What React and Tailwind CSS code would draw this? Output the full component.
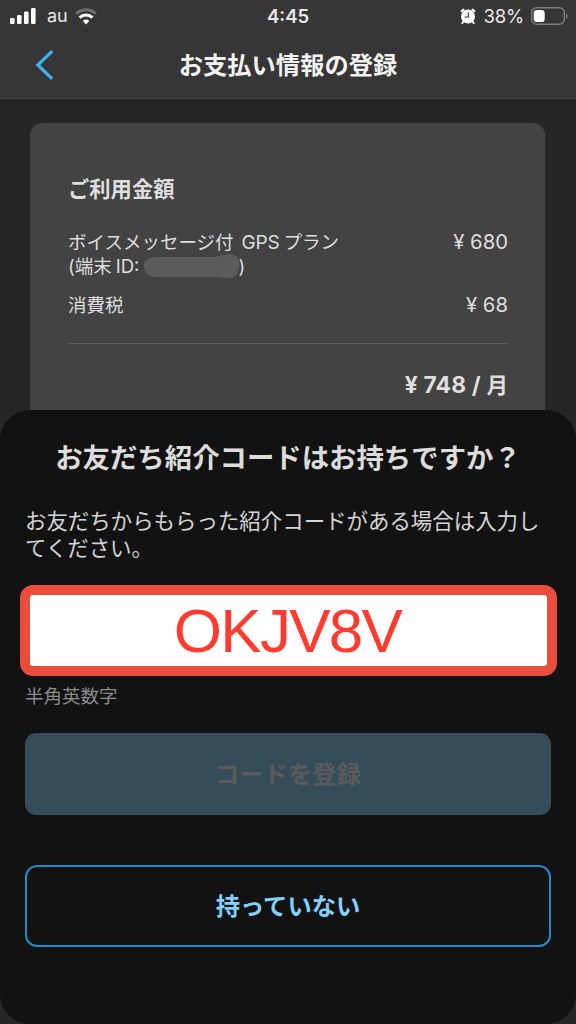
import React, { useState } from 'react';

const SignalIcon = () => (
  <svg width="26" height="16" viewBox="0 0 26 16" fill="#fff">
    <rect x="0" y="10" width="4.6" height="6" rx="1.3" />
    <rect x="7" y="7" width="4.6" height="9" rx="1.3" />
    <rect x="14" y="3.5" width="4.6" height="12.5" rx="1.3" />
    <rect x="21" y="0" width="4.6" height="16" rx="1.3" />
  </svg>
);

const WifiIcon = () => (
  <svg width="22" height="17" viewBox="0 0 22 17" fill="none">
    <path d="M1.2 5.6a14.2 14.2 0 0 1 19.6 0" stroke="#6e6e6e" strokeWidth="3" />
    <path d="M4.6 9.6a9.2 9.2 0 0 1 12.8 0" stroke="#fff" strokeWidth="3.2" />
    <path d="M11 16.6 7.8 13.1a4.7 4.7 0 0 1 6.4 0z" fill="#fff" />
  </svg>
);

const AlarmIcon = () => (
  <svg width="16" height="17" viewBox="0 0 16 17">
    <circle cx="8" cy="8.6" r="7" fill="#fff" />
    <path d="M1.8 3.2 3.3 1.8M14.2 3.2 12.7 1.8" stroke="#fff" strokeWidth="2.4" strokeLinecap="round" />
    <path d="M3.4 13.6 2.2 15.2M12.6 13.6 13.8 15.2" stroke="#fff" strokeWidth="1.8" strokeLinecap="round" />
    <path d="M8.4 4.6V9H4.6" fill="none" stroke="#363636" strokeWidth="1.1" />
  </svg>
);

const BatteryIcon = () => (
  <svg width="37" height="18" viewBox="0 0 37 18">
    <rect x="0.7" y="0.7" width="32.6" height="16.6" rx="5" fill="none" stroke="#7c7c7c" strokeWidth="1.4" />
    <rect x="2.7" y="2.9" width="11" height="12.2" rx="3.4" fill="#fff" />
    <path d="M35 6.2c2 .8 2 4.8 0 5.6z" fill="#7c7c7c" />
  </svg>
);

const StatusBar = () => (
  <div className="grid grid-cols-3 items-center h-8 pl-[10px] pr-2 font-['Inter',sans-serif] text-[#e8e8e8]">
    <div className="flex items-center">
      <SignalIcon />
      <span className="ml-[11px] mr-[7px] text-[18px] leading-none">au</span>
      <WifiIcon />
    </div>
    <span className="-ml-[2px] text-center text-[18.5px] leading-none font-semibold">4:45</span>
    <div className="flex items-center justify-end">
      <AlarmIcon />
      <span className="ml-2 mr-[7px] text-[18.5px] leading-none tracking-[-0.2px]">38%</span>
      <BatteryIcon />
    </div>
  </div>
);

const Header = () => (
  <header className="bg-[#363636] border-b border-[#454545] h-[99px]">
    <StatusBar />
    <div className="grid grid-cols-[80px_1fr_80px] items-center h-[66px]">
      <button className="pl-[35px]" aria-label="戻る">
        <svg width="19" height="30" viewBox="0 0 19 30" fill="none">
          <path d="M17.2 1.2 2.8 15l14.4 13.8" stroke="#3fb0f2" strokeWidth="3.2" />
        </svg>
      </button>
      <h1 className="text-center text-[24.3px] leading-none font-bold text-[#f2f2f2]">お支払い情報の登録</h1>
    </div>
  </header>
);

const BillingCard = () => (
  <section className="ml-[30px] mr-[31px] mt-6 h-[320px] rounded-t-[12px] bg-[#434343] pl-[38px] pr-[37px] pt-[54px] text-[#dedede]">
    <h2 className="text-[21.3px] leading-6 font-bold">ご利用金額</h2>
    <div className="mt-[29px] flex h-12 justify-between text-[18.5px] leading-6">
      <div>
        <p className="h-6">
          ボイスメッセージ付
          <span className="ml-[8px] mr-[4px] text-[19px] leading-none tracking-[-0.2px]">GPS</span>プラン
        </p>
        <p className="flex h-6 items-center">
          (端末<span className="ml-[4px]">ID:</span>
          <svg className="ml-1 -mr-[2px]" width="97" height="25" viewBox="0 0 97 25">
            <path
              d="M12 3H68C77 3 79 0 87 0c7 0 10 6 9 13-1 7-3 11-10 11-7 0-9-1-16-1H14C6 23 1 19 1 12 1 7 5 3 12 3z"
              fill="#5b5b5b"
            />
          </svg>
          )
        </p>
      </div>
      <p className="text-[20.3px]">¥ 680</p>
    </div>
    <div className="mt-[15px] flex h-6 justify-between text-[18.5px] leading-6">
      <p>消費税</p>
      <p className="text-[20.3px]">¥ 68</p>
    </div>
    <p className="mt-[26px] border-t border-[#5a5a5a] pt-[29px] text-right text-[21.5px] leading-6 font-bold">
      <span className="text-[22.8px] leading-none tracking-[0.2px]">¥ 748 / </span>月
    </p>
  </section>
);

const ReferralSheet = () => {
  const [code, setCode] = useState('OKJV8V');

  return (
    <div className="absolute inset-x-0 bottom-0 h-[614px] rounded-[30px] bg-[#121212] px-[25px] pt-[34px]">
      <h2 className="text-center text-[27.4px] leading-7 font-bold whitespace-nowrap text-[#dcdcdc]">
        お友だち紹介コードはお持ちですか？
      </h2>
      <p className="-mr-2 mt-[36px] text-[21.45px] leading-[27px] text-[#d4d4d4]">
        お友だちからもらった紹介コードがある場合は入力し
        <br />
        てください。
      </p>
      <input
        className="-ml-[5px] mt-[23px] block h-[91px] w-[537px] rounded-[13px] border-[10px] border-[#e94d3d] bg-white pr-[2px] text-center font-['Liberation_Sans',sans-serif] text-[62px] tracking-[-1.7px] text-[#ff3b30] outline-none"
        value={code}
        onChange={(e) => setCode(e.target.value)}
      />
      <p className="mt-2 text-[18.5px] leading-6 text-[#8b8b8b]">半角英数字</p>
      <button className="mt-[25px] block h-[82px] w-[526px] rounded-[11px] bg-[#354c59] text-[24.3px] font-bold text-[#5c5a5a]">
        コードを登録
      </button>
      <button className="mt-[50px] block h-[82px] w-[526px] rounded-[12px] border-2 border-[#1b8dca] text-[24.3px] font-bold text-[#82d0fa]">
        持っていない
      </button>
    </div>
  );
};

const App = () => (
  <div className="relative h-[1024px] w-[576px] overflow-hidden bg-[#262626] font-['Inter','Noto_Sans_CJK_JP',sans-serif]">
    <Header />
    <BillingCard />
    <ReferralSheet />
  </div>
);

export default App;
